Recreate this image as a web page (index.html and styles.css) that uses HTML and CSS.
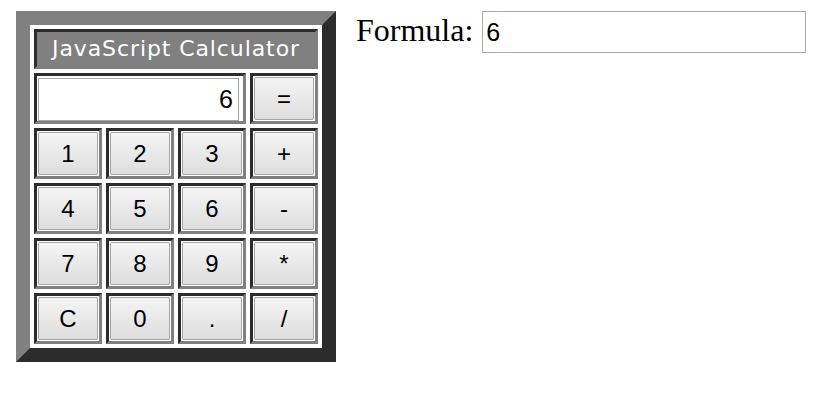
FILE: index.html
```
<!DOCTYPE html>
<html>
<head>
<meta charset="utf-8">
<title>JavaScript Calculator</title>
<link rel="stylesheet" href="styles.css">
</head>
<body>
<div class="page">
  <div class="calc">
    <div class="cell title">JavaScript Calculator</div>
    <div class="cell display-cell"><input class="display" type="text" value="6" readonly></div>
    <div class="cell"><button class="key">=</button></div>
    <div class="cell"><button class="key">1</button></div>
    <div class="cell"><button class="key">2</button></div>
    <div class="cell"><button class="key">3</button></div>
    <div class="cell"><button class="key">+</button></div>
    <div class="cell"><button class="key">4</button></div>
    <div class="cell"><button class="key">5</button></div>
    <div class="cell"><button class="key">6</button></div>
    <div class="cell"><button class="key">-</button></div>
    <div class="cell"><button class="key">7</button></div>
    <div class="cell"><button class="key">8</button></div>
    <div class="cell"><button class="key">9</button></div>
    <div class="cell"><button class="key">*</button></div>
    <div class="cell"><button class="key">C</button></div>
    <div class="cell"><button class="key">0</button></div>
    <div class="cell"><button class="key">.</button></div>
    <div class="cell"><button class="key">/</button></div>
  </div>
  <div class="formula">
    <span class="formula-label">Formula:</span>
    <input class="formula-input" type="text" value="6">
  </div>
</div>
</body>
</html>
```
FILE: styles.css
```
html, body {
  margin: 0;
  padding: 0;
  background: #ffffff;
}

.page {
  display: flex;
  align-items: flex-start;
  gap: 20px;
  padding: 11px 0 0 16px;
}

.calc {
  display: grid;
  grid-template-columns: repeat(4, 68px);
  grid-template-rows: 40px repeat(5, 51px);
  gap: 4px;
  padding: 4px;
  background: #ffffff;
  border: 14px outset #808080;
}

.cell {
  box-sizing: border-box;
  border: 3px inset #808080;
  padding: 1px;
  display: flex;
}

.title {
  grid-column: 1 / -1;
  background: #808080;
  color: #ffffff;
  font-family: "DejaVu Sans", sans-serif;
  font-size: 22px;
  align-items: center;
  justify-content: center;
  padding: 0 0 2px 0;
  letter-spacing: 0.9px;
}

.display-cell {
  grid-column: span 3;
}

.display {
  box-sizing: border-box;
  width: 201px;
  height: 43px;
  margin: 1px 0 0 0;
  border: 1px solid #a4a4a4;
  padding: 0 5px;
  font-family: "Liberation Sans", Arial, sans-serif;
  font-size: 25px;
  text-align: right;
  color: #000000;
  background: #ffffff;
  outline: none;
}

.key {
  box-sizing: border-box;
  width: 100%;
  height: 100%;
  margin: 0;
  padding: 0;
  border: 1px solid #a6a6a6;
  border-radius: 2px;
  background: linear-gradient(#f4f4f4, #dedede);
  font-family: "Liberation Sans", Arial, sans-serif;
  font-size: 24px;
  color: #000000;
}

.formula {
  display: flex;
  align-items: baseline;
  gap: 9px;
}

.formula-label {
  font-family: "Liberation Serif", "Times New Roman", serif;
  font-size: 32px;
  color: #000000;
}

.formula-input {
  box-sizing: border-box;
  width: 324px;
  height: 42px;
  margin: 0;
  border: 1px solid #a9a9a9;
  padding: 1px 3px;
  font-family: "Liberation Sans", Arial, sans-serif;
  font-size: 25px;
  color: #000000;
  background: #ffffff;
  outline: none;
}
```
